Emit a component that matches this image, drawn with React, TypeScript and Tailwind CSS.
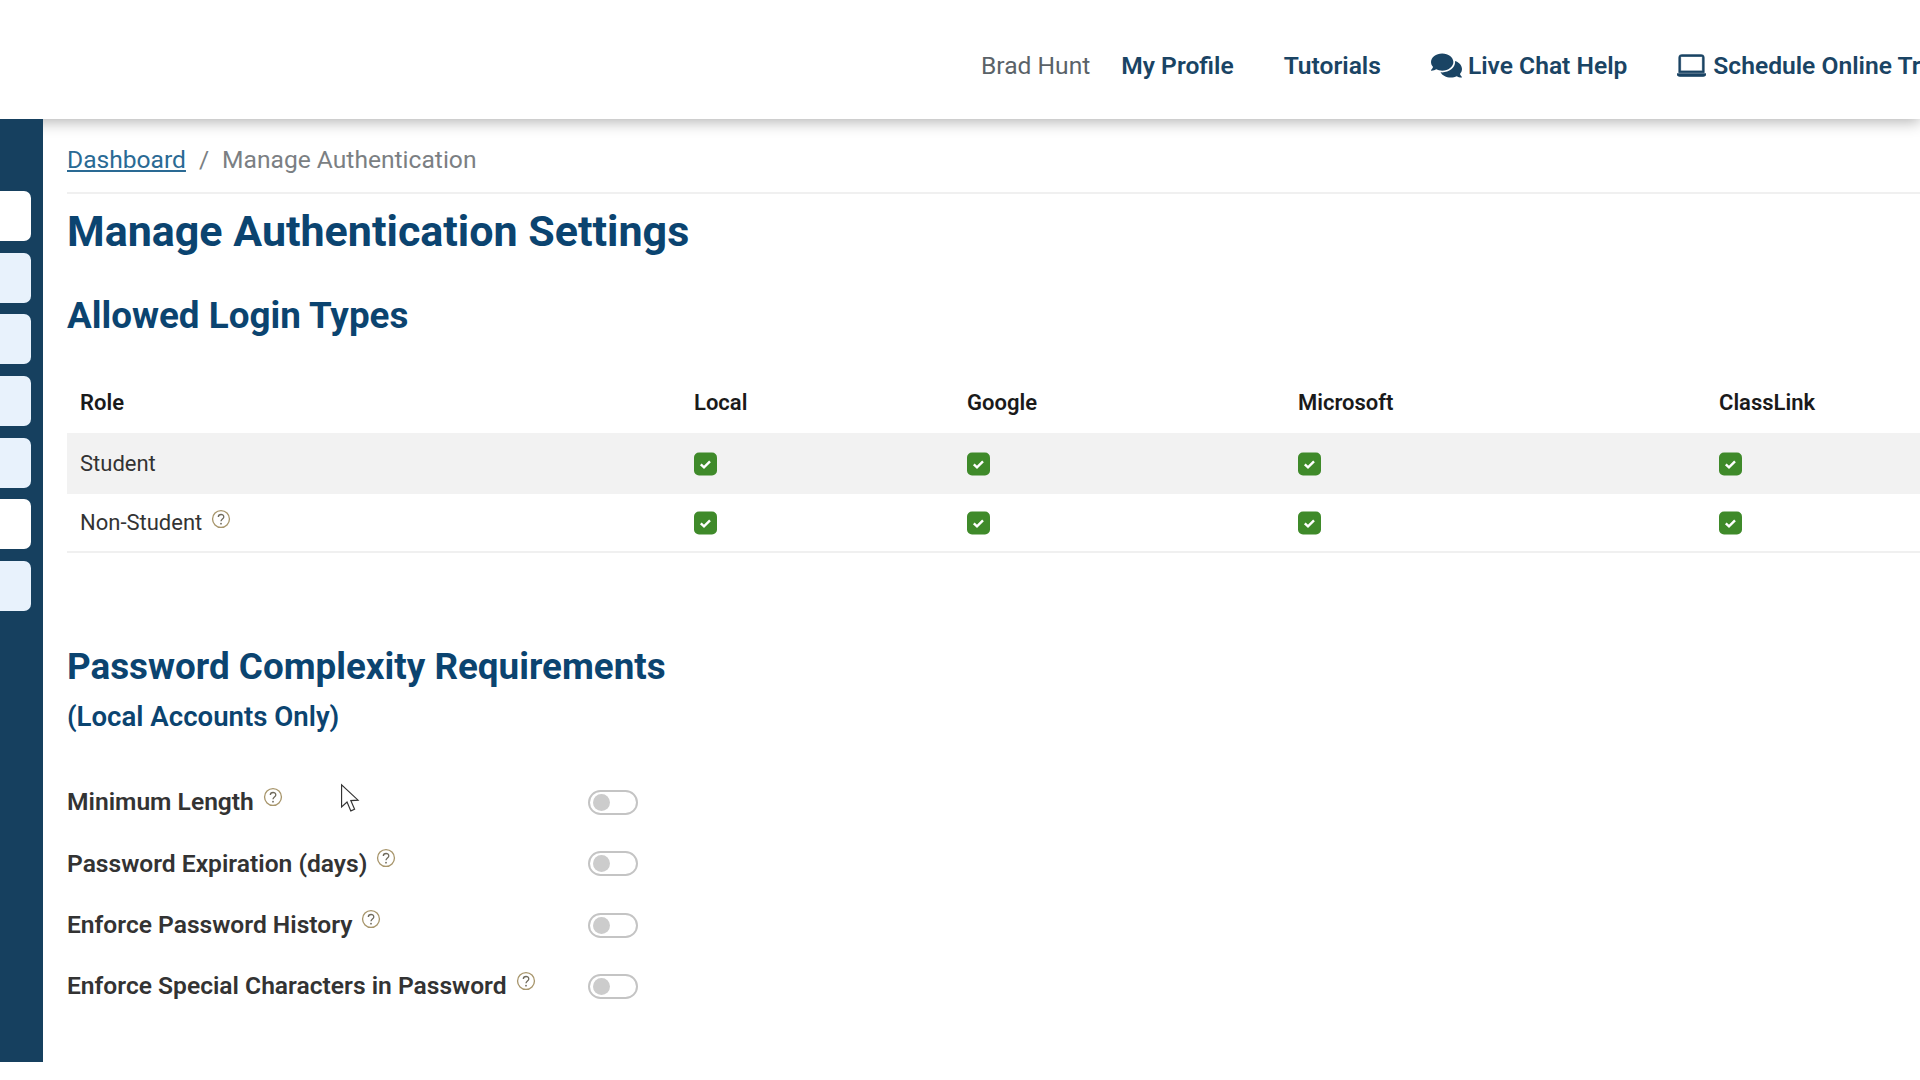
import { FaComments } from "react-icons/fa";
import { BsLaptop } from "react-icons/bs";

const sideTabs = ["bg-white", "bg-[#e8f2fc]", "bg-[#e8f2fc]", "bg-[#e8f2fc]", "bg-[#e8f2fc]", "bg-white", "bg-[#e8f2fc]"];
const roles = ["Student", "Non-Student"];
const settings = [
  "Minimum Length",
  "Password Expiration (days)",
  "Enforce Password History",
  "Enforce Special Characters in Password",
];

function HelpIcon({ lift }: { lift: string }) {
  return (
    <svg viewBox="0 0 18 18" className={`ml-[9px] h-[20px] w-[20px] shrink-0 ${lift}`} fill="none">
      <circle cx="9" cy="9" r="7.6" stroke="#a8966c" strokeWidth="1.2" />
      <path d="M6.6 7.2c0-3 4.9-3 4.9-.1 0 1.9-2.5 2-2.5 4" stroke="#6f6a5c" strokeWidth="1.2" />
      <circle cx="9" cy="13.2" r=".8" fill="#6f6a5c" />
    </svg>
  );
}

function Toggle() {
  return (
    <div className="flex h-[25px] w-[50px] items-center rounded-full border-2 border-[#c4c4c4] bg-white pl-[3px]">
      <div className="h-[17px] w-[17px] rounded-full bg-[#cccccc]" />
    </div>
  );
}

function Check() {
  return (
    <svg viewBox="0 0 23 23" className="h-[24px] w-[23px]">
      <rect width="23" height="23" rx="5" fill="#3f8a2a" />
      <path d="M6.8 11.8l3.2 3.1 6-6" fill="none" stroke="#fff" strokeWidth="2.4" />
    </svg>
  );
}

export default function App() {
  return (
    <div className="relative h-[1080px] w-[1920px] overflow-hidden bg-white font-['Roboto',sans-serif]">
      <header className="relative z-10 flex h-[119px] items-center whitespace-nowrap bg-white pl-[981px] pt-[13px] text-[24.6px] font-semibold text-[#1a4464] shadow-[0_3px_14px_rgba(0,0,0,0.3)]">
        <span className="font-normal text-[#5a6268]">Brad Hunt</span>
        <span className="ml-[31px]">My Profile</span>
        <span className="ml-[50px]">Tutorials</span>
        <span className="ml-[50px] flex items-center gap-[6px]">
          <FaComments size={31} />
          Live Chat Help
        </span>
        <span className="ml-[50px] flex items-center gap-[7px]">
          <BsLaptop size={29} className="stroke-[#1a4464] stroke-[0.4px]" />
          Schedule Online Training
        </span>
      </header>

      <div className="flex">
        <aside className="relative z-20 flex h-[943px] w-[43px] shrink-0 flex-col gap-[11.7px] bg-[#16405f] pt-[72px]">
          {sideTabs.map((tab, i) => (
            <div key={i} className={`h-[50px] w-[31px] rounded-r-[7px] ${tab}`} />
          ))}
        </aside>

        <main className="w-[1877px] shrink-0 pl-[24px]">
          <div className="flex h-[75px] items-center gap-[13px] border-b-2 border-[#f0f0f0] pt-[10px] text-[24.6px] text-[#7b7f83]">
            <a className="text-[#2a6a94] underline">Dashboard</a>
            <span>/</span>
            <span>Manage Authentication</span>
          </div>

          <h1 className="mt-[13px] text-[43px] font-bold leading-[48px] text-[#0b4470]">Manage Authentication Settings</h1>
          <h2 className="mt-[40px] text-[36.8px] font-bold leading-[42px] text-[#0b4470]">Allowed Login Types</h2>

          <table className="mt-[34px] w-[1853px] table-fixed border-collapse text-left text-[22px] text-[#333333]">
            <thead>
              <tr className="h-[62px]">
                <th className="w-[614px] pl-[13px] font-semibold text-[#1a1a1a]">Role</th>
                <th className="w-[273px] pl-[13px] font-semibold text-[#1a1a1a]">Local</th>
                <th className="w-[331px] pl-[13px] font-semibold text-[#1a1a1a]">Google</th>
                <th className="w-[421px] pl-[13px] font-semibold text-[#1a1a1a]">Microsoft</th>
                <th className="pl-[13px] font-semibold text-[#1a1a1a]">ClassLink</th>
              </tr>
            </thead>
            <tbody>
              {roles.map((role, i) => (
                <tr key={role} className={i === 0 ? "h-[61px] bg-[#f2f2f2]" : "h-[58px] border-b-2 border-[#f0f0f0]"}>
                  <td className="pl-[13px]">
                    <span className="flex items-center">
                      {role}
                      {i === 1 && <HelpIcon lift="mb-[8px]" />}
                    </span>
                  </td>
                  {[0, 1, 2, 3].map((c) => (
                    <td key={c} className="pl-[13px]">
                      <Check />
                    </td>
                  ))}
                </tr>
              ))}
            </tbody>
          </table>

          <h2 className="mt-[93px] text-[36.8px] font-bold leading-[42px] text-[#0b4470]">Password Complexity Requirements</h2>
          <h3 className="mt-[11px] text-[27.6px] font-semibold leading-[36px] text-[#0b4470]">(Local Accounts Only)</h3>

          <div className="mt-[37px] flex flex-col">
            {settings.map((label) => (
              <div key={label} className="flex h-[61.3px] items-center">
                <div className="flex w-[521px] items-center text-[24.6px] font-semibold text-[#333333]">
                  {label}
                  <HelpIcon lift="mb-[12px]" />
                </div>
                <Toggle />
              </div>
            ))}
          </div>
        </main>
      </div>

      {/* mouse pointer caught in the screenshot */}
      <svg viewBox="0 0 20 30" className="absolute left-[340px] top-[783px] z-30 h-[32px] w-[21px]" fill="#fff" stroke="#333" strokeWidth="1.1">
        <path d="M1.5 1.5v21l5.2-4.6 3.6 8.4 3.6-1.6-3.6-8.2 6.9-.4z" />
      </svg>
    </div>
  );
}
